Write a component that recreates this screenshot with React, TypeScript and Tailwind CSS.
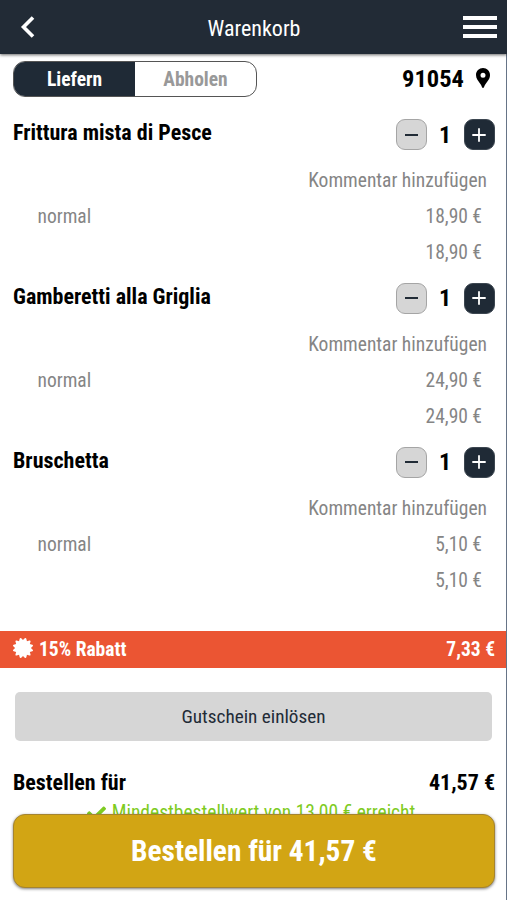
import React from "react";
import { MdLocationPin } from "react-icons/md";
import { FaCertificate, FaCheck } from "react-icons/fa";

const items = [
  { name: "Frittura mista di Pesce", price: "18,90 €" },
  { name: "Gamberetti alla Griglia", price: "24,90 €" },
  { name: "Bruschetta", price: "5,10 €" },
];

function Item({ name, price }: { name: string; price: string }) {
  return (
    <section className="h-[163.8px] text-[19.5px] text-[#858585]">
      <div className="flex h-[37px] items-center pl-[13px] pr-[11.5px]">
        <h2 className="mb-1 flex-1 text-[22px] font-bold text-black">{name}</h2>
        <button className="flex size-[31px] items-center justify-center rounded-[9px] border border-[#a5a5a5] bg-[#d6d6d6]">
          <span className="h-[2px] w-[13px] bg-[#222c37]" />
        </button>
        <span className="w-[37px] text-center text-[24px] font-bold text-black">1</span>
        <button className="flex size-[31px] items-center justify-center rounded-[9px] border border-[#3c4650] bg-[#1f2a36]">
          <svg viewBox="0 0 14 14" className="size-[14px]" stroke="white" strokeWidth="1.8">
            <path d="M7 .3v13.4M.3 7h13.4" />
          </svg>
        </button>
      </div>
      <div className="mt-[9px] h-9 pr-[19px] text-right leading-[37px]">Kommentar hinzufügen</div>
      <div className="flex h-9 justify-between pl-[37.5px] pr-6 leading-[37px]">
        <span>normal</span>
        <span>{price}</span>
      </div>
      <div className="h-9 pr-6 text-right leading-[37px]">{price}</div>
    </section>
  );
}

export default function App() {
  return (
    <div className="relative flex h-[900px] w-[507px] flex-col overflow-hidden bg-white font-['Roboto_Condensed',Roboto,sans-serif] [font-stretch:75%]">
      <header className="z-10 flex h-[54px] shrink-0 items-center justify-between bg-[#222b36] pl-5 pr-[10px] shadow-[0_1px_3px_rgba(0,0,0,0.6)]">
        <svg viewBox="0 0 16 24" className="h-6 w-4" fill="none" stroke="white" strokeWidth="3.6">
          <path d="M13 2.5 3.5 12 13 21.5" />
        </svg>
        <h1 className="ml-[9px] mt-[3px] text-[22px] text-white">Warenkorb</h1>
        <div className="flex w-[34px] flex-col gap-[5px]">
          <span className="h-1 bg-white" />
          <span className="h-1 bg-white" />
          <span className="h-1 bg-white" />
        </div>
      </header>
      <main className="flex flex-1 flex-col border-r border-[#667487]">
        <div className="mt-[7px] flex h-[36px] shrink-0 items-center justify-between pl-[13px] pr-[11px]">
          <div className="flex h-[36px] w-[244px] overflow-hidden rounded-[12px] border border-[#555] text-[19.5px] font-bold leading-[35px]">
            <span className="w-[121px] bg-[#1f2a36] text-center text-white">Liefern</span>
            <span className="flex-1 text-center text-[#999]">Abholen</span>
          </div>
          <div className="flex items-center pt-px text-[24.5px] font-bold text-black">
            91054
            <MdLocationPin className="mb-[3px] ml-[7px] size-6" />
          </div>
        </div>
        <div className="mt-[19px] h-[515px] shrink-0">
          {items.map((item) => (
            <Item key={item.name} name={item.name} price={item.price} />
          ))}
        </div>
        <div className="flex h-[37px] shrink-0 items-center bg-[#eb5533] pl-[13px] pr-[11px] text-[19.5px] font-bold text-white">
          <FaCertificate className="mb-[3px] mr-[6px] size-5" />
          <span className="mt-px flex-1">15% Rabatt</span>
          <span className="mt-px">7,33 €</span>
        </div>
        <button className="ml-[15px] mt-6 h-[49px] w-[477px] shrink-0 rounded-[5px] bg-[#d6d6d6] pt-[2px] text-[19.2px] text-[#222b36]">
          Gutschein einlösen
        </button>
        <div className="mt-6 flex h-9 shrink-0 items-center justify-between pb-px pl-[13px] pr-[11px] text-[22px] font-bold text-black">
          <span>Bestellen für</span>
          <span>41,57 €</span>
        </div>
        <div className="flex h-6 shrink-0 items-center justify-center pr-1 text-[19.5px] text-[#7ecb22]">
          <FaCheck className="mr-[6px] mt-px size-[19px]" />
          Mindestbestellwert von 13,00 € erreicht
        </div>
      </main>
      <button className="absolute bottom-3 left-[13px] h-[74px] w-[482px] rounded-[12px] border border-[#a58430] bg-[#d2a514] text-[29.4px] font-bold text-white shadow-[0_1px_3px_rgba(0,0,0,0.5)]">
        Bestellen für 41,57 €
      </button>
    </div>
  );
}
